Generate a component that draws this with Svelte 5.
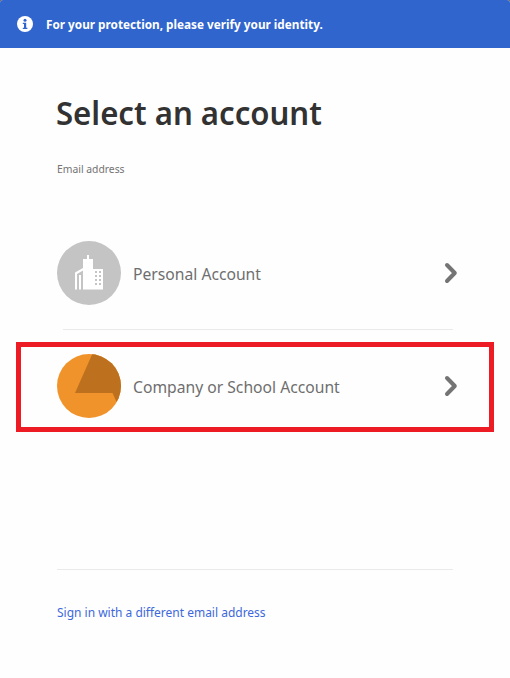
<script>
  const accounts = [
    { name: 'Personal Account', kind: 'personal' },
    { name: 'Company or School Account', kind: 'company' }
  ];
</script>

<div class="page">
  <header class="banner">
    <svg width="16" height="16" viewBox="0 0 16 16" aria-hidden="true">
      <circle cx="8" cy="8" r="8" fill="#fff" />
      <circle cx="8" cy="4.2" r="1.5" fill="#3065ce" />
      <path d="M5.8 6.8h3.4v5h1.2V13H5.8v-1.2H7V8H5.8z" fill="#3065ce" />
    </svg>
    <span class="notice">For your protection, please verify your identity.</span>
  </header>

  <main>
    <h1>Select an account</h1>
    <p class="email">Email address</p>

    <div class="accounts">
      {#each accounts as account}
        <button class="account {account.kind}">
          {#if account.kind === 'personal'}
            <svg class="avatar" width="64" height="64" viewBox="0 0 64 64" aria-hidden="true">
              <circle cx="32" cy="32" r="32" fill="#c4c4c4" />
              <path
                fill="#fff"
                fill-rule="evenodd"
                d="M18 31.5l8-4.5v-9h4v-4h2v4h4v10h10v20.5H26V29.5l-6 3.4V48.5h-2zM22 34h2v14.5h-2zM38 30v2h2v-2zM42 30v2h2v-2zM38 34v2h2v-2zM42 34v2h2v-2zM38 38v2h2v-2zM42 38v2h2v-2zM38 42v2h2v-2zM42 42v2h2v-2z"
              />
            </svg>
          {:else}
            <svg class="avatar" width="64" height="64" viewBox="0 0 64 64" aria-hidden="true">
              <defs><clipPath id="disc"><circle cx="32" cy="32" r="32" /></clipPath></defs>
              <g clip-path="url(#disc)">
                <path d="M0 0h64v64H0z" fill="#f1932b" />
                <path d="M35.7-1L18 39h37.5L60 49l4-3V-1z" fill="#bd711e" />
              </g>
            </svg>
          {/if}
          <span class="name">{account.name}</span>
          <svg class="chevron" width="14" height="22" viewBox="0 0 14 22" aria-hidden="true">
            <path d="M3 3l7.8 8L3 19" fill="none" stroke="#747474" stroke-width="4" stroke-linecap="round" stroke-linejoin="round" />
          </svg>
        </button>
      {/each}
      <div class="highlight"></div>
    </div>

    <footer><a href="#top">Sign in with a different email address</a></footer>
  </main>
</div>

<style>
  :global(body) { margin: 0; background: #7b5b42; }
  .page {
    width: 510px;
    height: 678px;
    overflow: hidden;
    background: #fefefe;
    border-radius: 3px 3px 0 0;
    font-family: 'Noto Sans', 'Open Sans', sans-serif;
    white-space: nowrap;
  }
  .banner {
    display: flex;
    align-items: center;
    box-sizing: border-box;
    height: 48px;
    padding-left: 17px;
    gap: 13px;
    background: #3065ce;
    color: #fff;
  }
  /* Condense the face slightly while keeping natural letter spacing. */
  .notice, h1, .email, .name, a { transform-origin: 0 50%; }
  .notice { font-size: 13px; font-weight: 700; line-height: 20px; transform: scaleX(0.904); }
  main { padding: 0 57px; }
  h1 {
    margin: 0 0 0 -1px;
    padding-top: 42px;
    color: #323232;
    font-size: 33px;
    font-weight: 600;
    line-height: 46px;
    transform: scaleX(0.943);
  }
  .email {
    margin: 0;
    padding-top: 25px;
    color: #747474;
    font-size: 11px;
    line-height: 16px;
    transform: scaleX(0.94);
  }
  .accounts { position: relative; height: 392px; box-sizing: border-box; padding-top: 64px; }
  .account {
    display: flex;
    align-items: center;
    width: 396px;
    height: 64px;
    padding: 0;
    border: 0;
    background: none;
    color: #6e6e6e;
    font: inherit;
  }
  .company { margin-top: 49px; }
  .avatar { flex: none; }
  .name { margin-left: 12px; padding-top: 2px; font-size: 17px; line-height: 24px; transform: scaleX(0.922); }
  .chevron { margin-left: auto; margin-right: -5px; }
  .accounts::before {
    content: '';
    position: absolute;
    left: 6px;
    top: 152px;
    width: 390px;
    height: 1px;
    background: #eaeaea;
  }
  .highlight {
    position: absolute;
    left: -41px;
    top: 165px;
    width: 478px;
    height: 90px;
    box-sizing: border-box;
    border: 5px solid #ed1c24;
    pointer-events: none;
  }
  footer { border-top: 1px solid #eaeaea; padding-top: 32px; }
  a { display: block; color: #3c68dc; font-size: 13px; line-height: 20px; text-decoration: none; transform: scaleX(0.922); }
</style>
